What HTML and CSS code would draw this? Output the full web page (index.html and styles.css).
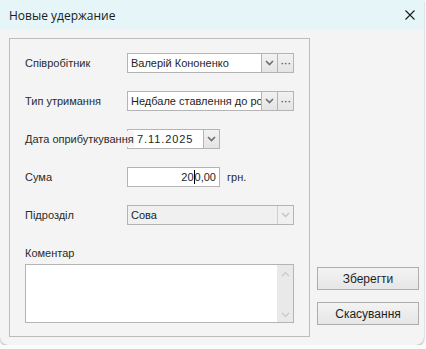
FILE: index.html
```html
<!DOCTYPE html>
<html lang="uk">
<head>
  <meta charset="UTF-8">
  <title>Новые удержание</title>
  <link rel="stylesheet" href="styles.css">
</head>
<body>
  <div class="window">
    <div class="titlebar">
      <span class="title">Новые удержание</span>
      <svg class="close" width="10" height="10" viewBox="0 0 10 10">
        <path d="M0.5 0.5 L9.5 9.5 M9.5 0.5 L0.5 9.5" stroke="#1a1a1a" stroke-width="1.1" fill="none"/>
      </svg>
    </div>

    <div class="content">
      <div class="panel">
        <div class="row">
          <label class="lbl">Співробітник</label>
          <div class="field wide">
            <div class="text">Валерій Кононенко</div>
            <div class="btn"><svg width="9" height="6" viewBox="0 0 9 6"><path d="M1 1 L4.5 4.5 L8 1" stroke="#6e6e6e" stroke-width="1.6" fill="none"/></svg></div>
            <div class="btn dots">···</div>
          </div>
        </div>

        <div class="row">
          <label class="lbl">Тип утримання</label>
          <div class="field wide">
            <div class="text">Недбале ставлення до роботи</div>
            <div class="btn"><svg width="9" height="6" viewBox="0 0 9 6"><path d="M1 1 L4.5 4.5 L8 1" stroke="#6e6e6e" stroke-width="1.6" fill="none"/></svg></div>
            <div class="btn dots">···</div>
          </div>
        </div>

        <div class="row">
          <div class="lbl-slot"><label class="lbl over">Дата оприбуткування</label></div>
          <div class="field date">
            <div class="text datev">7.11.2025</div>
            <div class="btn"><svg width="9" height="6" viewBox="0 0 9 6"><path d="M1 1 L4.5 4.5 L8 1" stroke="#6e6e6e" stroke-width="1.6" fill="none"/></svg></div>
          </div>
        </div>

        <div class="row">
          <label class="lbl">Сума</label>
          <div class="field sum">
            <div class="text num">20<span class="caret"></span>0,00</div>
          </div>
          <span class="unit">грн.</span>
        </div>

        <div class="row">
          <label class="lbl">Підрозділ</label>
          <div class="field wide disabled">
            <div class="text">Сова</div>
            <div class="btn off"><svg width="9" height="6" viewBox="0 0 9 6"><path d="M1 1 L4.5 4.5 L8 1" stroke="#c4c4c4" stroke-width="1.4" fill="none"/></svg></div>
          </div>
        </div>

        <div class="comment">
          <label class="lbl">Коментар</label>
          <div class="memo">
            <div class="memo-text"></div>
            <div class="scroll">
              <svg width="9" height="6" viewBox="0 0 9 6"><path d="M1 5 L4.5 1.5 L8 5" stroke="#c8c8c8" stroke-width="1.2" fill="none"/></svg>
              <svg width="9" height="6" viewBox="0 0 9 6"><path d="M1 1 L4.5 4.5 L8 1" stroke="#c8c8c8" stroke-width="1.2" fill="none"/></svg>
            </div>
          </div>
        </div>
      </div>

      <div class="actions">
        <button class="button">Зберегти</button>
        <button class="button">Скасування</button>
      </div>
    </div>
  </div>
</body>
</html>
```

FILE: styles.css
```css
/* Сторінка */
body {
  margin: 0;
  padding: 0;
  background: #fbfbfb;
  font-family: "Liberation Sans", Arial, sans-serif;
  color: #2b2b2b;
}

/* Вікно діалогу */
.window {
  width: 424px;
  height: 345px;
  background: #f4f4f4;
  border-radius: 0 0 8px 8px;
  box-shadow: 0 1px 2px rgba(0,0,0,0.35);
  overflow: hidden;
}
.titlebar {
  height: 30px;
  background: #e5f5f8;
  display: flex;
  align-items: center;
  padding: 0 9px;
}
.title {
  flex: 1;
  font-family: "Open Sans", "Noto Sans", sans-serif;
  font-size: 12px;
  color: #1a1a1a;
}

/* Основна частина */
.content {
  display: flex;
  padding: 8px 0 0 9px;
}
.panel {
  width: 301px;
  height: 299px;
  border: 1px solid #bcbcbc;
  padding: 14px 0 0 15px;
  box-sizing: border-box;
  display: flex;
  flex-direction: column;
  gap: 18px;
}

/* Рядки форми */
.row {
  display: flex;
  align-items: center;
  height: 20px;
}
.lbl {
  width: 102px;
  flex-shrink: 0;
  font-size: 11px;
  color: #2b2b2b;
  white-space: nowrap;
}
.lbl-slot {
  width: 102px;
  flex-shrink: 0;
  position: relative;
  z-index: 1;
  height: 20px;
  display: flex;
  align-items: center;
}
.lbl.over {
  width: auto;
  background: #f4f4f4;
  line-height: 16px;
}
.field {
  display: flex;
  height: 20px;
  box-sizing: border-box;
  border: 1px solid #b4b4b4;
  background: #fff;
}
.field.wide { width: 167px; }
.field.date { width: 93px; }
.field.sum { width: 93px; }
.field.disabled { background: #f0f0f0; }

.text {
  flex: 1;
  min-width: 0;
  overflow: hidden;
  white-space: nowrap;
  font-size: 11px;
  line-height: 18px;
  padding-left: 3px;
  color: #1e1e1e;
}
.datev { padding-left: 9px; letter-spacing: 0.9px; }
.num { text-align: right; padding-right: 3px; }
.caret {
  display: inline-block;
  width: 0;
  height: 14px;
  border-left: 1px solid #000;
  vertical-align: -3px;
}
.unit {
  margin-left: 7px;
  font-size: 11px;
}

.btn {
  width: 15px;
  flex-shrink: 0;
  border-left: 1px solid #b4b4b4;
  background: linear-gradient(#f2f2f2, #e4e4e4);
  display: flex;
  align-items: center;
  justify-content: center;
}
.btn.off { background: #f0f0f0; border-left-color: #cfcfcf; }
.dots {
  font-size: 12px;
  color: #444;
  letter-spacing: -0.5px;
  line-height: 18px;
}

/* Коментар */
.comment {
  margin-top: 4px;
  display: flex;
  flex-direction: column;
  gap: 5px;
}
.memo {
  width: 269px;
  height: 59px;
  box-sizing: border-box;
  border: 1px solid #b4b4b4;
  background: #fff;
  display: flex;
}
.memo-text { flex: 1; }
.scroll {
  width: 16px;
  background: #e9e9e9;
  display: flex;
  flex-direction: column;
  justify-content: space-between;
  align-items: center;
  padding: 6px 0 4px;
}

/* Кнопки */
.actions {
  display: flex;
  flex-direction: column;
  gap: 12px;
  margin: 229px 0 0 7px;
}
.button {
  width: 102px;
  height: 23px;
  border: 1px solid #adadad;
  background: linear-gradient(#f3f3f3, #e6e6e6);
  font-family: "Liberation Sans", Arial, sans-serif;
  font-size: 12px;
  color: #1e1e1e;
  padding: 0;
}
```
